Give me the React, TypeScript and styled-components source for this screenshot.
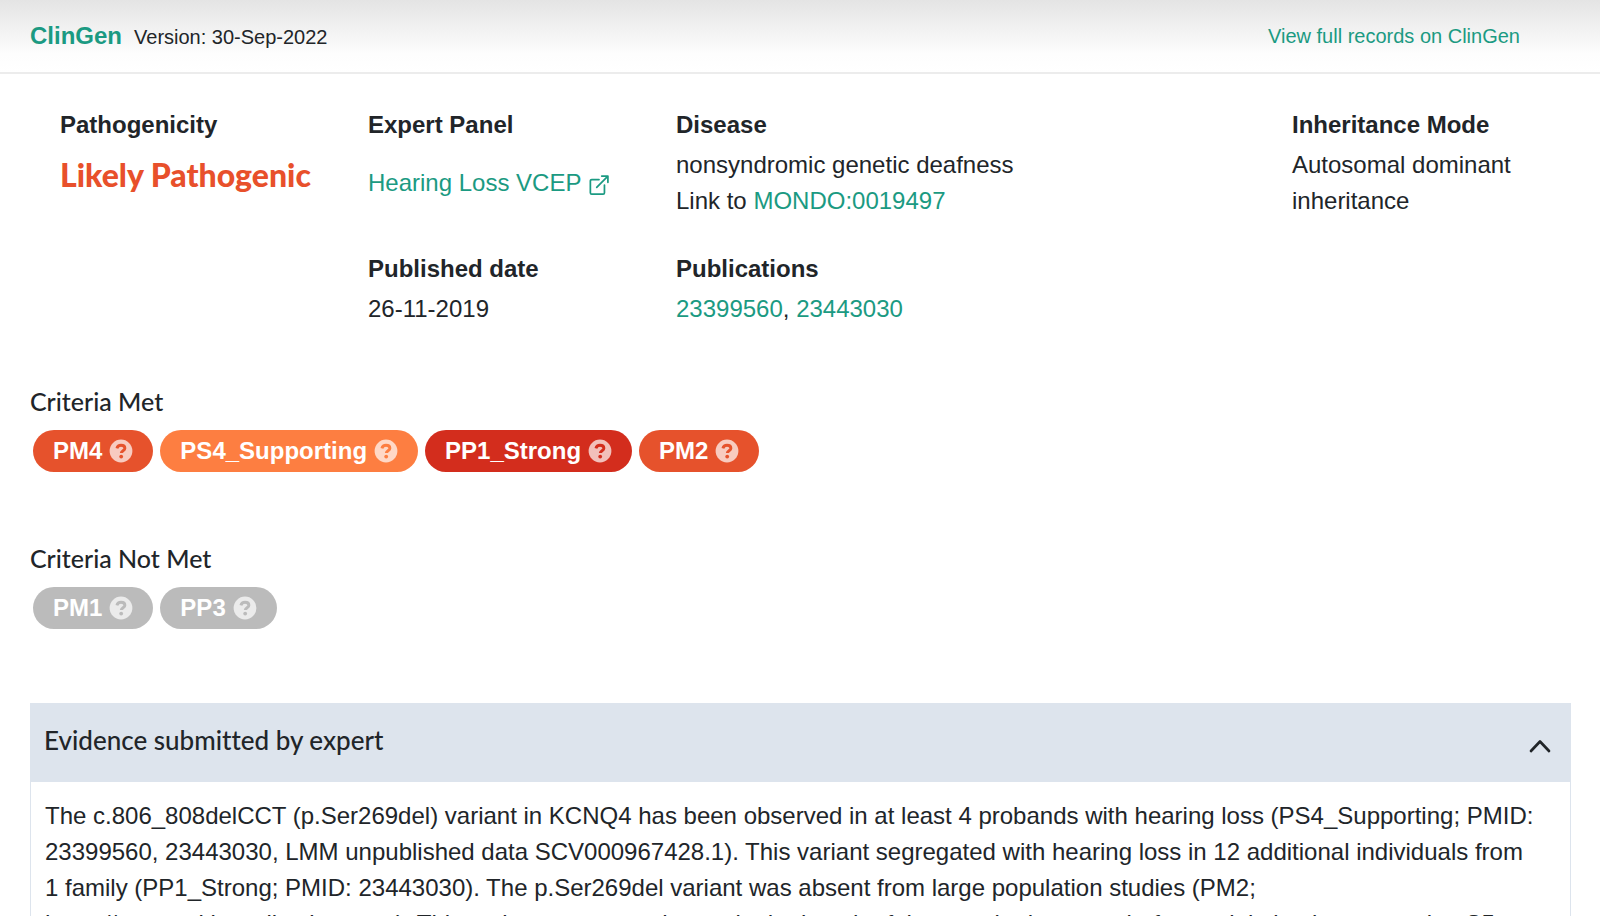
import React, { useState } from "react";
import styled, { createGlobalStyle } from "styled-components";

const GlobalStyle = createGlobalStyle`
  *, *::before, *::after { box-sizing: border-box; }
  body {
    margin: 0;
    background: #fff;
    color: #212529;
    font-family: "Liberation Sans", Arial, sans-serif;
    font-size: 24px;
    line-height: 36px;
  }
  h2, h3, p, dl, dd, ul { margin: 0; padding: 0; }
`;

const sans = `"Liberation Sans", Arial, sans-serif`;
const display = `Lato, "Open Sans", sans-serif`;

const Page = styled.main`
  height: 100vh;
  overflow: hidden;
  background: #fff;
`;

const TopBar = styled.header`
  display: flex;
  align-items: center;
  justify-content: space-between;
  height: 74px;
  padding: 0 80px 0 30px;
  border-bottom: 2px solid #ececec;
  background: linear-gradient(#e4e4e4, #fdfdfd 75%, #fff);
`;

const Source = styled.div`
  display: flex;
  align-items: baseline;
  gap: 12px;
`;

const SourceName = styled.h2`
  font-size: 24px;
  line-height: 36px;
  color: #1b9a82;
`;

const Version = styled.span`
  font-size: 20px;
`;

const Link = styled.a<{ $small?: boolean }>`
  display: inline-flex;
  align-items: center;
  gap: 8px;
  font-size: ${({ $small }) => ($small ? 20 : 24)}px;
  color: #1b9a82;
  text-decoration: none;

  svg {
    margin-top: 4px;
  }
`;

const Summary = styled.dl`
  display: grid;
  grid-template-columns: 2fr 2fr 4fr 2fr;
  row-gap: 32px;
  padding: 33px 0 0 60px;
`;

const Field = styled.div<{ $column?: number }>`
  grid-column: ${({ $column }) => $column ?? "auto"};
`;

const Label = styled.dt`
  margin-bottom: 4px;
  font-weight: 700;
`;

const Value = styled.dd<{ $spaced?: boolean }>`
  padding-top: ${({ $spaced }) => ($spaced ? 18 : 0)}px;
`;

const Verdict = styled.dd`
  padding-top: 10px;
  font: 900 32px/36px ${display};
  color: #e8502b;
`;

const Criteria = styled.section<{ $first?: boolean }>`
  padding: ${({ $first }) => ($first ? 56 : 68)}px 30px 0;
`;

const Heading = styled.h3`
  font: 500 25px/36px ${display};
`;

const Badges = styled.ul`
  display: flex;
  flex-wrap: wrap;
  gap: 7px;
  padding: 11px 3px 0;
  list-style: none;
`;

const Badge = styled.button<{ $color: string }>`
  display: flex;
  align-items: center;
  gap: 7px;
  height: 42px;
  padding: 0 20px;
  border: 0;
  border-radius: 21px;
  background: ${({ $color }) => $color};
  color: #fff;
  font: 700 24px/36px ${sans};
`;

const Evidence = styled.section`
  margin: 74px 29px 0 30px;
`;

const EvidenceToggle = styled.button`
  display: flex;
  align-items: center;
  justify-content: space-between;
  width: 100%;
  height: 78px;
  padding: 0 20px 4px 14px;
  border: 0;
  background: #dde4ed;
  color: #212529;
  font: 500 26px/36px ${display};
  font-variant-ligatures: none;

  svg {
    margin-top: 12px;
  }
`;

const EvidenceText = styled.p`
  padding: 16px 36px 16px 14px;
  border: 1px solid #dde4ed;
`;

const ExternalIcon = () => (
  <svg width="20" height="20" viewBox="0 0 22 22" fill="none" stroke="currentColor" strokeWidth="1.9" strokeLinecap="round" strokeLinejoin="round" aria-hidden="true">
    <path d="M11 5H3a1.500 1.500 0 0 0-1.500 1.500v13A1.500 1.500 0 0 0 3 21h12.500a1.500 1.500 0 0 0 1.500-1.500V11M14 1.200h6.800V8M20.500 1.500L8.500 13.500" />
  </svg>
);

const HelpIcon = () => (
  <svg width="24" height="24" viewBox="0 0 24 24" aria-hidden="true">
    <mask id="help-mark">
      <circle cx="12" cy="12" r="11.400" fill="#fff" />
      <path d="M7.900 9.300C8.500 7.100 10 6.200 12 6.200c2.200 0 3.900 1.100 3.900 3 0 2.500-3.600 2.500-3.600 4.900" fill="none" stroke="#000" strokeWidth="2.900" />
      <circle cx="12.200" cy="17.600" r="1.900" fill="#000" />
    </mask>
    <rect width="24" height="24" fill="#fff" fillOpacity="0.7" mask="url(#help-mark)" />
  </svg>
);

const ChevronUp = () => (
  <svg width="22" height="14" viewBox="0 0 22 14" fill="none" stroke="currentColor" strokeWidth="2.700" strokeLinecap="round" strokeLinejoin="round" aria-hidden="true">
    <path d="M2 12L11 2.500L20 12" />
  </svg>
);

type Criterion = { code: string; color: string };

const met: Criterion[] = [
  { code: "PM4", color: "#e6522c" },
  { code: "PS4_Supporting", color: "#fd7e41" },
  { code: "PP1_Strong", color: "#d32d1d" },
  { code: "PM2", color: "#e6522c" },
];

const notMet: Criterion[] = [
  { code: "PM1", color: "#bbb" },
  { code: "PP3", color: "#bbb" },
];

const CriteriaList = ({ title, items, first }: { title: string; items: Criterion[]; first?: boolean }) => (
  <Criteria $first={first}>
    <Heading>{title}</Heading>
    <Badges>
      {items.map(({ code, color }) => (
        <li key={code}>
          <Badge type="button" $color={color}>
            {code}
            <HelpIcon />
          </Badge>
        </li>
      ))}
    </Badges>
  </Criteria>
);

export default function App() {
  const [open, setOpen] = useState(true);
  return (
    <Page>
      <GlobalStyle />
      <TopBar>
        <Source>
          <SourceName>ClinGen</SourceName>
          <Version>Version: 30-Sep-2022</Version>
        </Source>
        <Link $small href="#records">View full records on ClinGen</Link>
      </TopBar>
      <Summary>
        <Field>
          <Label>Pathogenicity</Label>
          <Verdict>Likely Pathogenic</Verdict>
        </Field>
        <Field>
          <Label>Expert Panel</Label>
          <Value $spaced>
            <Link href="#panel">Hearing Loss VCEP <ExternalIcon /></Link>
          </Value>
        </Field>
        <Field>
          <Label>Disease</Label>
          <Value>
            nonsyndromic genetic deafness
            <br />
            Link to <Link href="#mondo">MONDO:0019497</Link>
          </Value>
        </Field>
        <Field>
          <Label>Inheritance Mode</Label>
          <Value>Autosomal dominant inheritance</Value>
        </Field>
        <Field $column={2}>
          <Label>Published date</Label>
          <Value>26-11-2019</Value>
        </Field>
        <Field $column={3}>
          <Label>Publications</Label>
          <Value>
            <Link href="#23399560">23399560</Link>, <Link href="#23443030">23443030</Link>
          </Value>
        </Field>
      </Summary>
      <CriteriaList first title="Criteria Met" items={met} />
      <CriteriaList title="Criteria Not Met" items={notMet} />
      <Evidence>
        <EvidenceToggle type="button" aria-expanded={open} onClick={() => setOpen(!open)}>
          Evidence submitted by expert
          <ChevronUp />
        </EvidenceToggle>
        {open && (
          <EvidenceText>
            The c.806_808delCCT (p.Ser269del) variant in KCNQ4 has been observed in at least 4 probands with hearing loss (PS4_Supporting; PMID: 23399560, 23443030, LMM unpublished data SCV000967428.1). This variant segregated with hearing loss in 12 additional individuals from 1 family (PP1_Strong; PMID: 23443030). The p.Ser269del variant was absent from large population studies (PM2; https://gnomad.broadinstitute.org). This variant causes a change in the length of the protein due to an in-frame deletion in pore region S5
          </EvidenceText>
        )}
      </Evidence>
    </Page>
  );
}
